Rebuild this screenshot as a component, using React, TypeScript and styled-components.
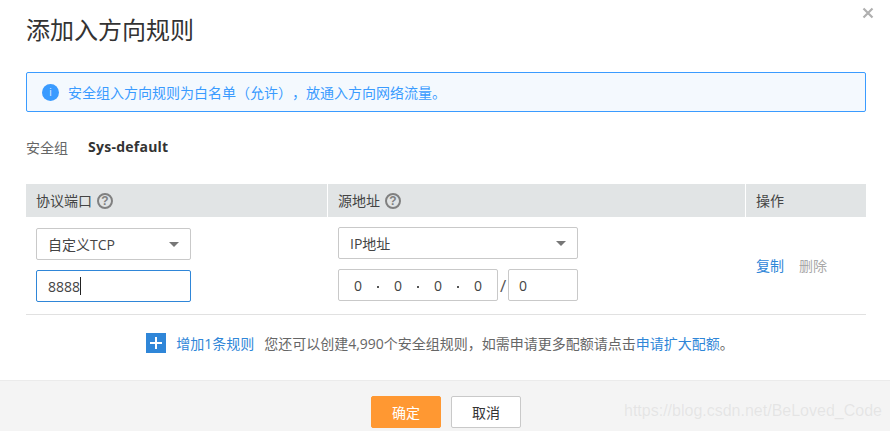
import React from "react";
import styled, { createGlobalStyle } from "styled-components";

const GlobalStyle = createGlobalStyle`
  html, body {
    margin: 0;
    padding: 0;
    background: #ffffff;
  }
  body {
    font-family: "Open Sans", "Noto Sans CJK SC", sans-serif;
    text-spacing-trim: space-all;
  }
`;

const ModalContainer = styled.div`
  position: relative;
  width: 890px;
  height: 431px;
  overflow: hidden;
  display: flex;
  flex-direction: column;
  background: #ffffff;
  color: #333333;
`;

const CloseButton = styled.svg`
  position: absolute;
  top: 7px;
  left: 862px;
  width: 12px;
  height: 12px;
`;

const Body = styled.div`
  flex: 1;
  display: flex;
  flex-direction: column;
  padding: 0 24px 0 26px;
`;

const Title = styled.h2`
  margin: 12px 0 0;
  height: 34px;
  font-size: 24px;
  font-weight: 400;
  line-height: 34px;
  color: #333333;
  font-family: "Noto Sans CJK SC", sans-serif;
`;

const Notice = styled.div`
  margin-top: 26px;
  height: 40px;
  box-sizing: border-box;
  display: flex;
  align-items: center;
  gap: 9px;
  padding-left: 15px;
  border: 1px solid #3a9bff;
  border-radius: 2px;
  background: #f4f9fe;
  color: #3a9bff;
  font-size: 14px;
`;

const InfoIcon = styled.span`
  width: 17px;
  height: 17px;
  border-radius: 50%;
  background: #3a9bff;
  color: #cfe6ff;
  display: flex;
  align-items: center;
  justify-content: center;
  font-size: 11px;
  font-family: "Liberation Sans", sans-serif;
`;

const GroupRow = styled.div`
  margin-top: 25px;
  height: 20px;
  display: flex;
  align-items: center;
  gap: 20px;
  font-size: 14px;
  color: #666666;
`;

const GroupName = styled.span`
  font-size: 14px;
  font-weight: 700;
  letter-spacing: 0.25px;
  color: #333333;
  position: relative;
  top: -1px;
`;

const RuleTable = styled.div`
  margin-top: 27px;
  display: grid;
  grid-template-columns: 301px 417px 120px;
  column-gap: 1px;
`;

const HeaderCell = styled.div`
  height: 33px;
  display: flex;
  align-items: center;
  gap: 5px;
  padding-left: 10px;
  background: #e1e4e5;
  font-size: 14px;
  color: #444444;
`;

const HeaderLabel = styled.span`
  margin-bottom: 2px;
`;

const HelpIcon = styled.span`
  width: 12px;
  height: 12px;
  border: 2px solid #808080;
  border-radius: 50%;
  color: #808080;
  display: flex;
  align-items: center;
  justify-content: center;
  font-size: 12px;
  font-weight: 700;
  font-family: "Liberation Sans", sans-serif;
`;

const BodyCell = styled.div`
  height: 98px;
  box-sizing: border-box;
  padding: ${(props: { $top: number }) => props.$top}px 0 0 10px;
  border-bottom: 1px solid #e1e1e1;
  margin-right: -1px;
  display: flex;
  flex-direction: column;
  gap: 10px;
`;

const ActionCell = styled(BodyCell)`
  margin-right: 0;
  flex-direction: row;
  align-items: center;
  gap: 15px;
  padding-top: 0;
  padding-bottom: 2px;
  font-size: 14px;
`;

const Select = styled.div<{ $width: number }>`
  width: ${(props) => props.$width}px;
  height: 32px;
  box-sizing: border-box;
  display: flex;
  align-items: center;
  justify-content: space-between;
  padding: 0 11px 0 11px;
  border: 1px solid #c9c9c9;
  border-radius: 2px;
  font-size: 14px;
  color: #444444;
`;

const Caret = styled.span`
  width: 0;
  height: 0;
  border-left: 5px solid transparent;
  border-right: 5px solid transparent;
  border-top: 5px solid #777777;
`;

const PortInput = styled.div`
  width: 155px;
  height: 32px;
  box-sizing: border-box;
  display: flex;
  align-items: center;
  padding-left: 11px;
  border: 1px solid #2f86d8;
  border-radius: 2px;
  font-size: 14px;
  color: #444444;
`;

const TextCursor = styled.span`
  width: 1px;
  height: 18px;
  background: #222222;
`;

const AddressRow = styled.div`
  display: flex;
  align-items: center;
`;

const IpBox = styled.div`
  width: 160px;
  height: 32px;
  box-sizing: border-box;
  display: flex;
  align-items: center;
  justify-content: space-between;
  padding: 0 15px;
  border: 1px solid #c9c9c9;
  border-radius: 2px;
  font-size: 14px;
  color: #444444;
`;

const Dot = styled.span`
  width: 2px;
  height: 2px;
  margin-top: 3px;
  background: #555555;
`;

const Slash = styled.span`
  width: 10px;
  text-align: center;
  font-size: 17px;
  color: #555555;
`;

const MaskBox = styled.div`
  width: 70px;
  height: 32px;
  box-sizing: border-box;
  display: flex;
  align-items: center;
  padding-left: 10px;
  border: 1px solid #c9c9c9;
  border-radius: 2px;
  font-size: 14px;
  color: #444444;
`;

const LinkText = styled.span<{ $muted?: boolean }>`
  color: ${(props) => (props.$muted ? "#a8a8a8" : "#2f86d8")};
`;

const AddRow = styled.div`
  margin-top: 18px;
  display: flex;
  align-items: center;
  justify-content: center;
  height: 20px;
  padding-right: 12px;
  font-size: 14px;
  color: #666666;
`;

const AddIcon = styled.span`
  width: 20px;
  height: 20px;
  margin-right: 10px;
  background: #2f86d8;
  display: flex;
  align-items: center;
  justify-content: center;
`;

const AddHint = styled.span`
  margin-left: 10px;
`;

const Footer = styled.div`
  height: 51px;
  box-sizing: border-box;
  display: flex;
  justify-content: center;
  gap: 10px;
  padding: 15px 0 0 2px;
  border-top: 1px solid #ebebeb;
  background: #f4f4f4;
`;

const FooterButton = styled.div<{ $primary?: boolean }>`
  width: 70px;
  height: 32px;
  box-sizing: border-box;
  display: flex;
  align-items: center;
  justify-content: center;
  border: 1px solid ${(props) => (props.$primary ? "#ff9832" : "#c9c9c9")};
  border-radius: 2px;
  background: ${(props) => (props.$primary ? "#ff9832" : "#ffffff")};
  color: ${(props) => (props.$primary ? "#ffffff" : "#333333")};
  font-size: 14px;
`;

const Watermark = styled.div`
  position: absolute;
  left: 624px;
  top: 402px;
  font-family: "Liberation Sans", sans-serif;
  font-size: 16px;
  color: rgba(190, 190, 190, 0.28);
`;

function App() {
  return (
    <ModalContainer>
      <GlobalStyle />
      <CloseButton viewBox="0 0 12 12">
        <path d="M1.5 1.5L10.5 10.5M10.5 1.5L1.5 10.5" stroke="#b0b0b0" strokeWidth="2.2" />
      </CloseButton>
      <Body>
        <Title>添加入方向规则</Title>
        <Notice>
          <InfoIcon>i</InfoIcon>
          安全组入方向规则为白名单（允许），放通入方向网络流量。
        </Notice>
        <GroupRow>
          安全组
          <GroupName>Sys-default</GroupName>
        </GroupRow>
        <RuleTable>
          <HeaderCell>
            <HeaderLabel>协议端口</HeaderLabel>
            <HelpIcon>?</HelpIcon>
          </HeaderCell>
          <HeaderCell>
            <HeaderLabel>源地址</HeaderLabel>
            <HelpIcon>?</HelpIcon>
          </HeaderCell>
          <HeaderCell>
            <HeaderLabel>操作</HeaderLabel>
          </HeaderCell>
          <BodyCell $top={11}>
            <Select $width={155}>
              自定义TCP
              <Caret />
            </Select>
            <PortInput>
              8888
              <TextCursor />
            </PortInput>
          </BodyCell>
          <BodyCell $top={10}>
            <Select $width={240}>
              IP地址
              <Caret />
            </Select>
            <AddressRow>
              <IpBox>
                0<Dot />0<Dot />0<Dot />0
              </IpBox>
              <Slash>/</Slash>
              <MaskBox>0</MaskBox>
            </AddressRow>
          </BodyCell>
          <ActionCell $top={0}>
            <LinkText>复制</LinkText>
            <LinkText $muted>删除</LinkText>
          </ActionCell>
        </RuleTable>
        <AddRow>
          <AddIcon>
            <svg width="12" height="12" viewBox="0 0 12 12">
              <path d="M6 0V12M0 6H12" stroke="#ffffff" strokeWidth="2" />
            </svg>
          </AddIcon>
          <LinkText>增加1条规则</LinkText>
          <AddHint>
            您还可以创建4,990个安全组规则，如需申请更多配额请点击
            <LinkText>申请扩大配额</LinkText>。
          </AddHint>
        </AddRow>
      </Body>
      <Footer>
        <FooterButton $primary>确定</FooterButton>
        <FooterButton>取消</FooterButton>
      </Footer>
      <Watermark>https://blog.csdn.net/BeLoved_Code</Watermark>
    </ModalContainer>
  );
}

export default App;
